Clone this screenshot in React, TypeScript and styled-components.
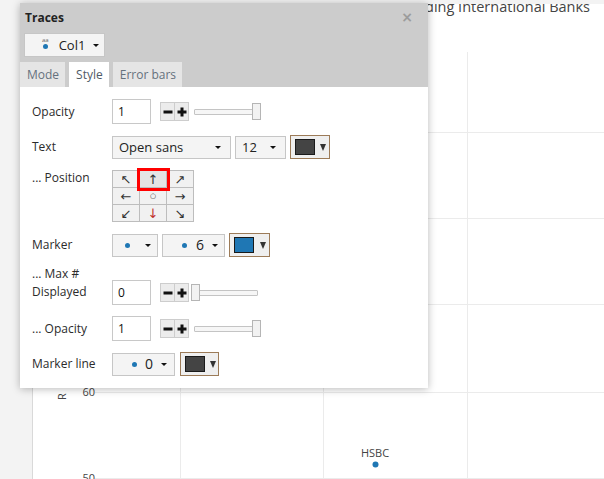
import React from "react";
import styled, { createGlobalStyle } from "styled-components";

const GlobalStyle = createGlobalStyle`
  html, body {
    margin: 0;
    padding: 0;
  }
  body {
    font-family: "Open Sans", "Liberation Sans", sans-serif;
    background: #f3f3f3;
    color: #333;
  }
`;

const BLUE = "#1f77b4";

const Chart = () => (
  <ChartSvg viewBox="33 4 571 475" width={571} height={475}>
    <text x={590} y={12} textAnchor="end" fontSize={14.5} fill="#444">
      Capital Ratios of Leading International Banks
    </text>
    {[180, 323, 467].map((x) => (
      <line key={x} x1={x + 0.5} x2={x + 0.5} y1={52} y2={479} stroke="#ebebeb" />
    ))}
    {[132, 218, 304, 392, 478].map((y) => (
      <line key={y} x1={95} x2={604} y1={y + 0.5} y2={y + 0.5} stroke="#ebebeb" />
    ))}
    <text x={95} y={396} textAnchor="end" fontSize={11} fill="#444">60</text>
    <text x={95} y={482} textAnchor="end" fontSize={11} fill="#444">50</text>
    <text transform="translate(66,400) rotate(-90)" fontSize={11} fill="#444">
      R
    </text>
    <text x={375} y={457} textAnchor="middle" fontSize={11} fill="#444">HSBC</text>
    <circle cx={375.5} cy={464.5} r={3} fill={BLUE} />
  </ChartSvg>
);

const PlusMinus = () => (
  <PMGroup>
    <PMButton>
      <svg width="10" height="10" viewBox="0 0 10 10">
        <rect x="0.5" y="3.5" width="9" height="3" fill="#111" />
      </svg>
    </PMButton>
    <PMButton>
      <svg width="10" height="10" viewBox="0 0 10 10">
        <rect x="0.5" y="3.5" width="9" height="3" fill="#111" />
        <rect x="3.5" y="0.5" width="3" height="9" fill="#111" />
      </svg>
    </PMButton>
  </PMGroup>
);

const Slider = ({ value }: { value: number }) => (
  <SliderBox>
    <Track />
    <Thumb style={{ left: `${value * 61}px` }} />
  </SliderBox>
);

const NumberRow = ({ value, slider }: { value: string; slider: number }) => (
  <Controls>
    <NumInput>{value}</NumInput>
    <PlusMinus />
    <Slider value={slider} />
  </Controls>
);

const Color = ({ w, c, gap }: { w: number; c: string; gap: number }) => (
  <ColorBox $w={w} $gap={gap}>
    <Swatch $c={c} />
    <ColorArrow />
  </ColorBox>
);

const arrows = ["↖", "↑", "↗", "←", "○", "→", "↙", "↓", "↘"];

export default function App() {
  return (
    <>
      <GlobalStyle />
      <Page>
        <ChartArea>
          <Chart />
        </ChartArea>

        <Panel>
          <Header>
            <TitleRow>
              <PanelTitle>Traces</PanelTitle>
              <Close>×</Close>
            </TitleRow>
            <Select $w={81} $pl={17} $pr={7} $h={24}>
              <TraceIcon>
                <Tiny>aa</Tiny>
                <Dot />
              </TraceIcon>
              <Value $ml={10}>Col1</Value>
              <Caret $ml={8} />
            </Select>
            <Tabs>
              <Tab>Mode</Tab>
              <Tab $active>Style</Tab>
              <Tab>Error bars</Tab>
            </Tabs>
          </Header>

          <Body>
            <Row>
              <Label>Opacity</Label>
              <NumberRow value="1" slider={1} />
            </Row>

            <Row>
              <Label>Text</Label>
              <Controls $gap={4}>
                <Select $w={119} $pl={6} $pr={9}>
                  <Value>Open sans</Value>
                  <Caret $ml="auto" />
                </Select>
                <Select $w={51} $pl={6} $pr={9}>
                  <Value>12</Value>
                  <Caret $ml="auto" />
                </Select>
                <Color w={40} c="#444" gap={5} />
              </Controls>
            </Row>

            <Row $align="start">
              <Label $mt={-1}>... Position</Label>
              <PosGrid>
                {arrows.map((a, i) => (
                  <PosCell key={a} $selected={i === 1} $red={i === 7} $small={i === 4}>
                    {a}
                  </PosCell>
                ))}
              </PosGrid>
            </Row>

            <Row>
              <Label>Marker</Label>
              <Controls $gap={4}>
                <Select $w={46} $pl={12} $pr={6}>
                  <Dot />
                  <Caret $ml="auto" />
                </Select>
                <Select $w={63} $pl={19} $pr={6}>
                  <Dot />
                  <Value $ml="auto" $size={14}>6</Value>
                  <Caret $ml={8} />
                </Select>
                <Color w={41} c={BLUE} gap={6} />
              </Controls>
            </Row>

            <Row $align="end" $mt={-3}>
              <Label $mb={4}>
                ... Max #
                <br />
                Displayed
              </Label>
              <NumberRow value="0" slider={0} />
            </Row>

            <Row>
              <Label>... Opacity</Label>
              <NumberRow value="1" slider={1} />
            </Row>

            <Row>
              <Label>Marker line</Label>
              <Controls $gap={5}>
                <Select $w={63} $pl={19} $pr={7}>
                  <Dot />
                  <Value $ml="auto" $size={14}>0</Value>
                  <Caret $ml={8} />
                </Select>
                <Color w={39} c="#444" gap={5} />
              </Controls>
            </Row>
          </Body>
        </Panel>
      </Page>
    </>
  );
}

const Page = styled.div`
  position: relative;
  width: 604px;
  height: 479px;
  overflow: hidden;
  box-sizing: border-box;
  padding: 4px 0 0 32px;
  background: #f3f3f3;
`;

const ChartArea = styled.div`
  height: 100%;
  background: #fff;
  border-left: 1px solid #d9d9d9;
  overflow: hidden;
`;

const ChartSvg = styled.svg`
  display: block;
  font-family: "Open Sans", "Liberation Sans", sans-serif;
`;

const Panel = styled.div`
  position: absolute;
  left: 20px;
  top: 3px;
  width: 408px;
  height: 385px;
  background: #fff;
  box-shadow: 0 1px 8px rgba(0, 0, 0, 0.28);
  display: flex;
  flex-direction: column;
  font-size: 12px;
`;

const Header = styled.div`
  background: #cccccc;
  display: flex;
  flex-direction: column;
  align-items: flex-start;
`;

const TitleRow = styled.div`
  align-self: stretch;
  height: 28px;
  display: flex;
  align-items: center;
  justify-content: space-between;
  padding: 0 15px 0 5px;
`;

const PanelTitle = styled.span`
  font-weight: bold;
  font-size: 12px;
  color: #222;
`;

const Close = styled.span`
  color: #9c9c9c;
  font-size: 14px;
  font-weight: bold;
  font-family: "DejaVu Sans", sans-serif;
`;

const Select = styled.div<{ $w: number; $pl: number; $pr: number; $h?: number }>`
  width: ${(p) => p.$w}px;
  height: ${(p) => p.$h ?? 23}px;
  box-sizing: border-box;
  display: flex;
  align-items: center;
  padding: 0 ${(p) => p.$pr}px 0 ${(p) => p.$pl}px;
  background: #f4f4f4;
  border: 1px solid #c6c6c6;
  margin-left: ${(p) => (p.$h ? "4px" : "0")};
  margin-top: ${(p) => (p.$h ? "2px" : "0")};
  font-size: 13px;
  color: #222;
`;

const Value = styled.span<{ $ml?: number | string; $size?: number }>`
  margin-left: ${(p) => (typeof p.$ml === "number" ? `${p.$ml}px` : p.$ml ?? "0")};
  font-size: ${(p) => p.$size ?? 13}px;
  line-height: 1;
`;

const Caret = styled.span<{ $ml?: number | string }>`
  flex: none;
  width: 0;
  height: 0;
  margin-left: ${(p) => (typeof p.$ml === "number" ? `${p.$ml}px` : p.$ml ?? "0")};
  border-left: 3px solid transparent;
  border-right: 3px solid transparent;
  border-top: 3px solid #111;
`;

const Dot = styled.span`
  flex: none;
  width: 5px;
  height: 5px;
  border-radius: 50%;
  background: ${BLUE};
`;

const TraceIcon = styled.span`
  display: flex;
  flex-direction: column;
  align-items: center;
  gap: 1px;
  margin-top: -3px;
`;

const Tiny = styled.span`
  font-size: 6px;
  line-height: 5px;
  color: #666;
`;

const Tabs = styled.div`
  display: flex;
  gap: 4px;
  margin-top: 5px;
`;

const Tab = styled.div<{ $active?: boolean }>`
  height: 25px;
  display: flex;
  align-items: center;
  padding: 0 6px 0 7px;
  background: ${(p) => (p.$active ? "#fff" : "#e5e5e5")};
  color: ${(p) => (p.$active ? "#4f5b66" : "#65717d")};
  font-size: 12px;
`;

const Body = styled.div`
  flex: 1;
  display: flex;
  flex-direction: column;
  gap: 11px;
  padding: 12px 12px 0 12px;
`;

const Row = styled.div<{ $align?: string; $mt?: number }>`
  display: grid;
  grid-template-columns: 80px auto;
  align-items: ${(p) => p.$align ?? "center"};
  margin-top: ${(p) => p.$mt ?? 0}px;
`;

const Label = styled.div<{ $mt?: number; $mb?: number }>`
  font-size: 12px;
  line-height: 18px;
  color: #2b2b2b;
  margin-top: ${(p) => p.$mt ?? 0}px;
  margin-bottom: ${(p) => p.$mb ?? 0}px;
`;

const Controls = styled.div<{ $gap?: number }>`
  display: flex;
  align-items: center;
  gap: ${(p) => p.$gap ?? 0}px;
`;

const NumInput = styled.div`
  width: 39px;
  height: 25px;
  box-sizing: border-box;
  border: 1px solid #c8c8c8;
  background: #fff;
  display: flex;
  align-items: center;
  padding-left: 5px;
  font-size: 12px;
  color: #111;
  margin-right: 9px;
`;

const PMGroup = styled.div`
  display: flex;
  height: 19px;
  box-sizing: border-box;
  border: 1px solid #cdcdcd;
  background: #ececec;
`;

const PMButton = styled.div`
  width: 13px;
  display: flex;
  align-items: center;
  justify-content: center;
  & + & {
    border-left: 1px solid #cdcdcd;
  }
`;

const SliderBox = styled.div`
  position: relative;
  width: 70px;
  height: 17px;
  margin-left: 2px;
`;

const Track = styled.div`
  position: absolute;
  left: 3px;
  right: 3px;
  top: 6px;
  height: 6px;
  box-sizing: border-box;
  border: 1px solid #c4c4c4;
  background: #f6f6f6;
  border-radius: 1px;
`;

const Thumb = styled.div`
  position: absolute;
  top: 0;
  width: 9px;
  height: 17px;
  box-sizing: border-box;
  border: 1px solid #b5b5b5;
  background: #f2f2f2;
`;

const ColorBox = styled.div<{ $w: number; $gap: number }>`
  width: ${(p) => p.$w}px;
  height: 24px;
  box-sizing: border-box;
  border: 1px solid #9c7b58;
  background: #efefef;
  display: flex;
  align-items: center;
  gap: ${(p) => p.$gap}px;
  padding-left: 4px;
`;

const Swatch = styled.span<{ $c: string }>`
  width: 20px;
  height: 16px;
  box-sizing: border-box;
  border: 1px solid #1a1a1a;
  background: ${(p) => p.$c};
`;

const ColorArrow = styled.span`
  width: 0;
  height: 0;
  border-left: 3px solid transparent;
  border-right: 3px solid transparent;
  border-top: 7px solid #333;
`;

const PosGrid = styled.div`
  display: grid;
  grid-template-columns: repeat(3, 27px);
  grid-auto-rows: 17px;
  width: max-content;
  border-top: 1px solid #bdbdbd;
  border-left: 1px solid #bdbdbd;
`;

const PosCell = styled.div<{ $selected?: boolean; $red?: boolean; $small?: boolean }>`
  position: relative;
  display: flex;
  align-items: center;
  justify-content: center;
  border-right: 1px solid #bdbdbd;
  border-bottom: 1px solid #bdbdbd;
  background: ${(p) => (p.$selected ? "#e4e4e4" : "#f1f1f1")};
  font-family: "DejaVu Sans", sans-serif;
  font-size: ${(p) => (p.$small ? 7 : 13)}px;
  line-height: 1;
  color: ${(p) => (p.$red ? "#c0302a" : "#333")};
  outline: ${(p) => (p.$selected ? "3px solid #ff0000" : "none")};
  outline-offset: 0;
  z-index: ${(p) => (p.$selected ? 1 : 0)};
`;
